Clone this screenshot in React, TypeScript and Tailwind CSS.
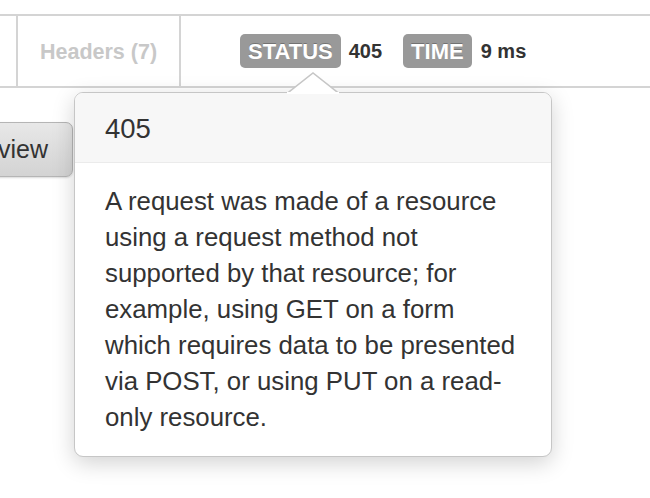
import React from 'react';

const font = { fontFamily: '"Liberation Sans", Arial, Helvetica, sans-serif' };

function Badge({ label }: { label: string }) {
  return (
    <span className="inline-flex h-[34px] items-center rounded-[5px] bg-[#999999] px-[8px] text-[22px] font-bold text-white [text-shadow:0_-1px_0_rgba(0,0,0,0.25)]">
      {label}
    </span>
  );
}

function Popover() {
  return (
    <div className="absolute left-[74px] top-[92px] w-[478px] rounded-[9px] border-[1.5px] border-[#c6c6c6] bg-white shadow-[0_6px_22px_rgba(0,0,0,0.18)]">
      {/* arrow */}
      <svg
        className="absolute left-[212px] top-[-21px]"
        width="52"
        height="22"
        viewBox="0 0 52 22"
      >
        <polygon points="0,21.5 26,1 52,21.5" fill="#ffffff" stroke="#c6c6c6" strokeWidth="1.5" />
        <rect x="0" y="20" width="52" height="2" fill="#ffffff" />
      </svg>
      <div className="flex h-[70px] items-center rounded-t-[8px] border-b-[1.5px] border-[#ebebeb] bg-[#f7f7f7] pl-[30px] pt-[2px] text-[27.5px] text-[#333333]">
        405
      </div>
      <div className="px-[30px] pb-[21px] pt-[20px] text-[25.8px] leading-[36px] text-[#333333]">
        A request was made of a resource
        <br />
        using a request method not
        <br />
        supported by that resource; for
        <br />
        example, using GET on a form
        <br />
        which requires data to be presented
        <br />
        via POST, or using PUT on a read-
        <br />
        only resource.
      </div>
    </div>
  );
}

export default function App() {
  return (
    <div className="relative h-[498px] w-[650px] overflow-hidden bg-white" style={font}>
      <div className="h-[14px]" />
      <div className="flex h-[74px] border-y-2 border-[#d4d4d4]">
        <div className="w-[18px] border-r-2 border-[#d4d4d4]" />
        <div className="flex w-[163px] items-center justify-center border-r-2 border-[#d4d4d4] pt-[2px] text-[21.5px] font-bold text-[#c8c8c8]">
          Headers (7)
        </div>
        <div className="flex flex-1 items-center pl-[59px]">
          <Badge label="STATUS" />
          <span className="ml-[8px] text-[20px] font-bold text-[#333333]">405</span>
          <span className="ml-[21px]">
            <Badge label="TIME" />
          </span>
          <span className="ml-[9px] text-[20px] font-bold text-[#333333]">9 ms</span>
        </div>
      </div>
      <div className="pt-[34px]">
        <button className="ml-[-27px] h-[55px] rounded-[7px] border border-[#b5b5b5] bg-gradient-to-b from-[#e8e8e8] to-[#d3d3d3] px-[24px] text-[25px] text-[#333333] shadow-[0_1px_2px_rgba(0,0,0,0.15)]">
          view
        </button>
      </div>
      <Popover />
    </div>
  );
}
